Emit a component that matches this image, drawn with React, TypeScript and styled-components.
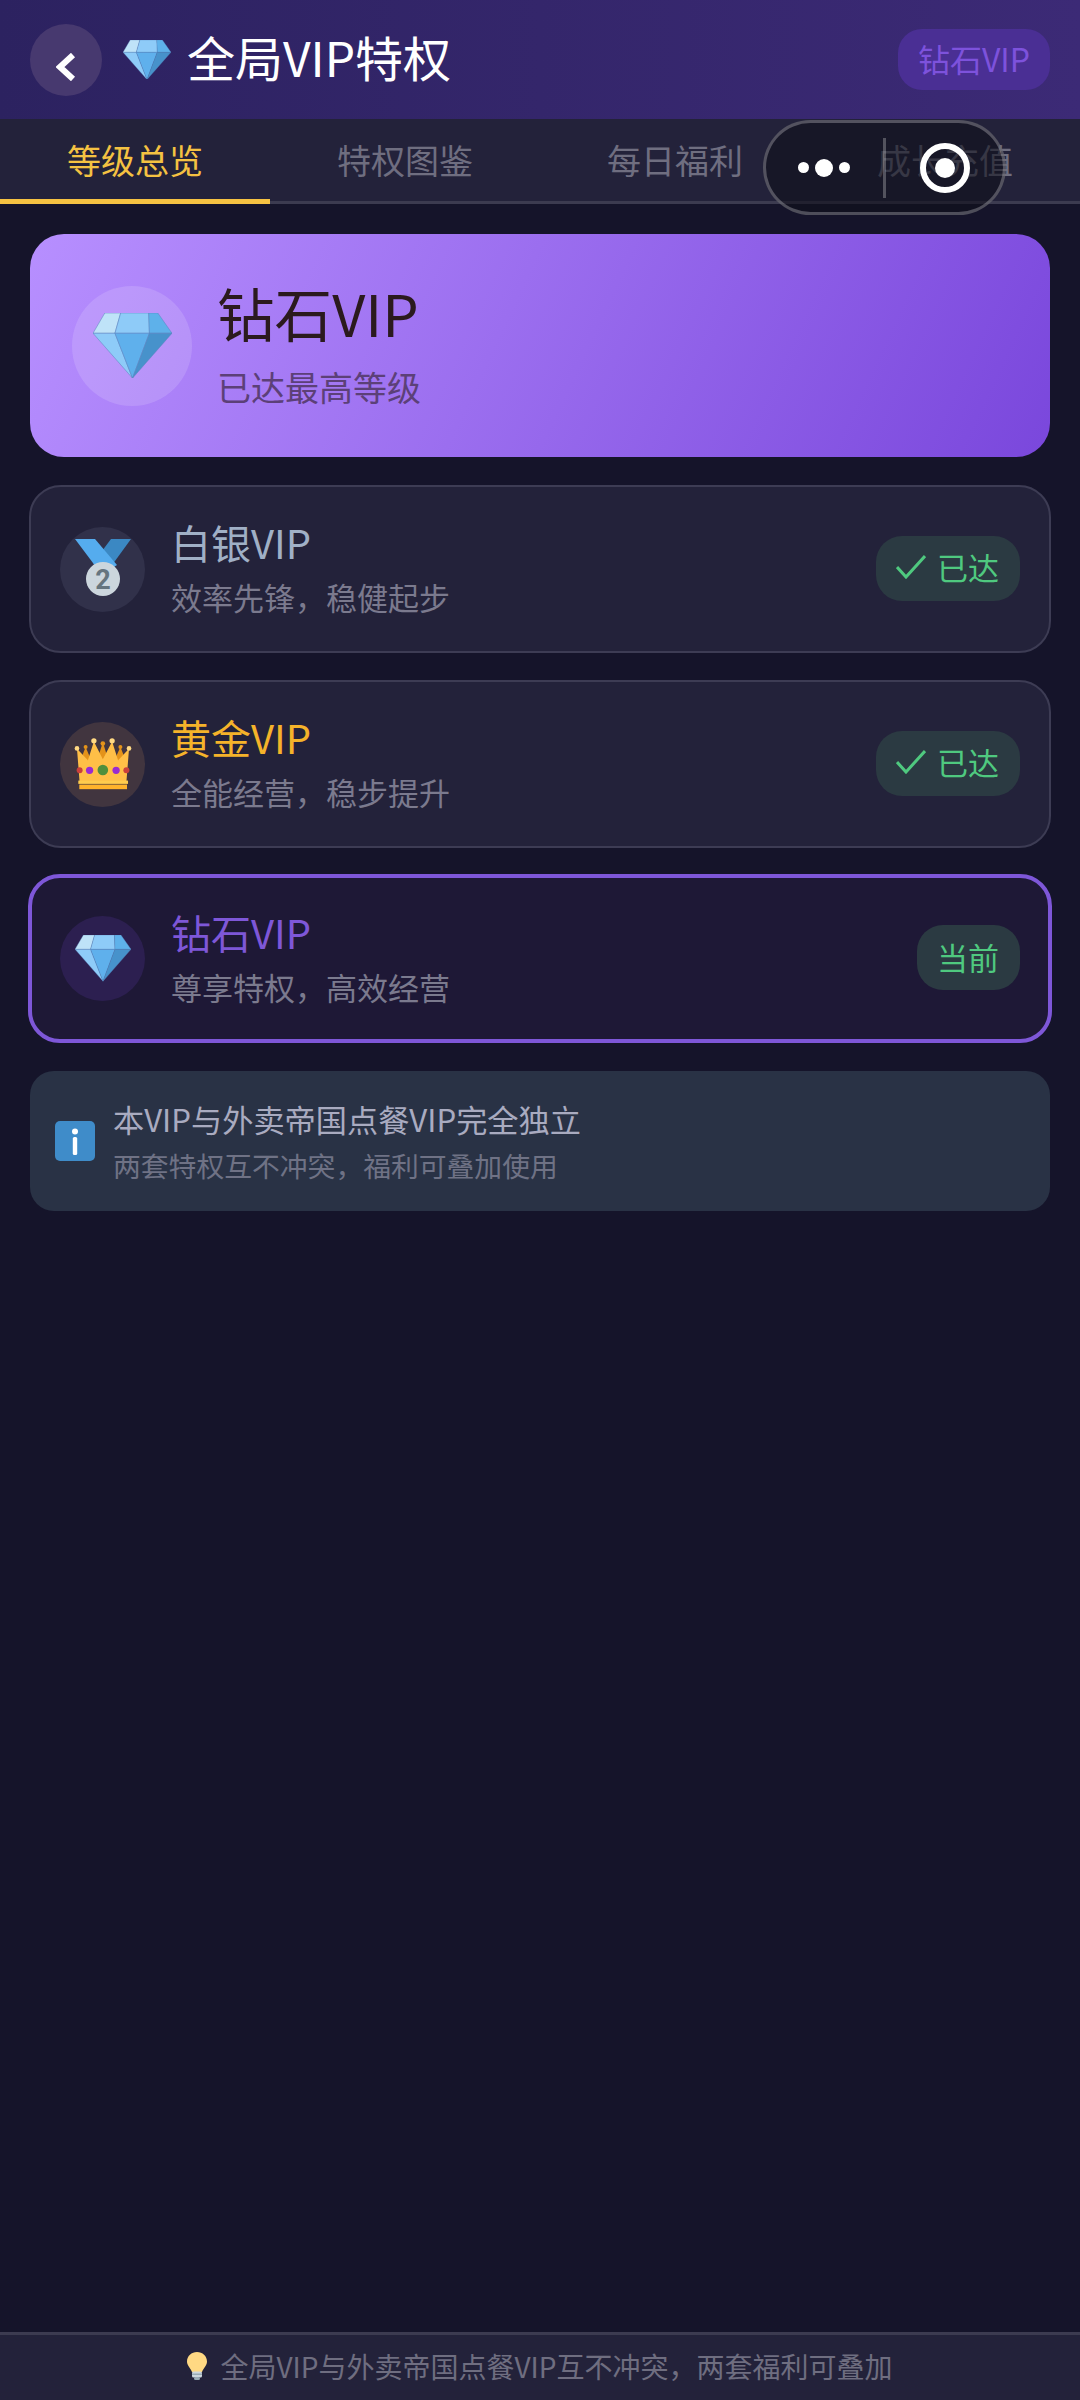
import styled, { createGlobalStyle } from "styled-components";

const GlobalStyle = createGlobalStyle`
  html, body {
    margin: 0;
    padding: 0;
    background: #15142a;
  }
  * {
    box-sizing: border-box;
  }
`;

const Page = styled.div`
  position: relative;
  display: flex;
  flex-direction: column;
  width: 1080px;
  height: 2400px;
  background: #15142a;
  font-family: "Noto Sans CJK SC", sans-serif;
  overflow: hidden;
`;

const Header = styled.header`
  display: flex;
  align-items: center;
  height: 119px;
  padding: 0 30px;
  background: linear-gradient(90deg, #2c2260, #3c2a76);
`;

const BackButton = styled.div`
  display: flex;
  align-items: center;
  justify-content: center;
  width: 72px;
  height: 72px;
  border-radius: 50%;
  background: #47396f;
  padding-top: 14px;
`;

const HeaderTitle = styled.h1`
  flex: 1;
  margin: 0 0 8px 16px;
  font-size: 48px;
  font-weight: 400;
  line-height: 60px;
  color: #ffffff;
`;

const HeaderIcon = styled.div`
  display: flex;
  margin-left: 21px;
`;

const LevelTag = styled.div`
  display: flex;
  align-items: center;
  justify-content: center;
  width: 152px;
  height: 61px;
  padding-bottom: 3px;
  border-radius: 24px;
  background: #4a2f94;
  color: #7d52dc;
  font-size: 32px;
`;

const Tabs = styled.nav`
  display: flex;
  height: 85px;
  background: #23223a;
  border-bottom: 3px solid #3c3b50;
`;

const Tab = styled.div<{ $active?: boolean }>`
  flex: 1;
  height: 85px;
  display: flex;
  align-items: center;
  justify-content: center;
  padding-bottom: ${(p) => (p.$active ? 0 : 5)}px;
  font-size: 34px;
  color: ${(p) => (p.$active ? "#f5c242" : "#6f6e80")};
  border-bottom: ${(p) => (p.$active ? "5px solid #f5c242" : "none")};
`;

const Capsule = styled.div`
  position: absolute;
  left: 763px;
  top: 120px;
  display: flex;
  align-items: center;
  width: 243px;
  height: 95px;
  border-radius: 48px;
  background: rgba(16, 15, 25, 0.58);
  border: 3px solid rgba(255, 255, 255, 0.26);
`;

const CapsuleSide = styled.div`
  flex: 1;
  height: 100%;
  display: flex;
  align-items: center;
  justify-content: center;
`;

const CapsuleLine = styled.div`
  width: 3px;
  height: 60px;
  background: rgba(255, 255, 255, 0.26);
`;

const Dots = styled.div`
  display: flex;
  align-items: center;
  gap: 6px;
  margin-right: 2px;
`;

const Dot = styled.span<{ $big?: boolean }>`
  display: block;
  width: ${(p) => (p.$big ? 18 : 11)}px;
  height: ${(p) => (p.$big ? 18 : 11)}px;
  border-radius: 50%;
  background: #ffffff;
`;

const Ring = styled.div`
  display: flex;
  align-items: center;
  justify-content: center;
  width: 50px;
  height: 50px;
  border-radius: 50%;
  border: 6px solid #ffffff;
  &::after {
    content: "";
    width: 20px;
    height: 20px;
    border-radius: 50%;
    background: #ffffff;
  }
`;

const Main = styled.main`
  flex: 1;
  display: flex;
  flex-direction: column;
  gap: 27px;
  padding: 30px 30px 0;
`;

const Hero = styled.section`
  display: flex;
  align-items: center;
  height: 223px;
  margin-bottom: 1px;
  padding-left: 42px;
  border-radius: 34px;
  background: linear-gradient(115deg, #b78fff, #7a47dc);
`;

const HeroBadge = styled.div`
  display: flex;
  align-items: center;
  justify-content: center;
  width: 120px;
  height: 120px;
  border-radius: 50%;
  background: rgba(255, 255, 255, 0.14);
`;

const HeroText = styled.div`
  margin-left: 25px;
  padding-bottom: 7px;
`;

const HeroTitle = styled.div`
  font-size: 57.6px;
  line-height: 72px;
  color: #2b1a1e;
`;

const HeroSub = styled.div`
  margin-top: 18px;
  font-size: 34px;
  line-height: 42px;
  color: #5c4078;
`;

const LevelCard = styled.section<{ $current?: boolean }>`
  display: flex;
  align-items: center;
  height: ${(p) => (p.$current ? 169 : 168)}px;
  margin: ${(p) => (p.$current ? "-1px -2px 0" : "0 -1px")};
  padding: 0 ${(p) => (p.$current ? 28 : 29)}px;
  border-radius: 32px;
  background: ${(p) => (p.$current ? "#1e1836" : "#23223a")};
  border: ${(p) => (p.$current ? "4px solid #7e57d8" : "2px solid #3d3c54")};
`;

const LevelIcon = styled.div<{ $bg: string }>`
  display: flex;
  align-items: center;
  justify-content: center;
  flex: none;
  width: 85px;
  height: 85px;
  border-radius: 50%;
  background: ${(p) => p.$bg};
`;

const LevelText = styled.div`
  flex: 1;
  margin-left: 26px;
  padding-bottom: 4px;
`;

const LevelName = styled.div<{ $color: string }>`
  font-size: 40px;
  line-height: 52px;
  color: ${(p) => p.$color};
`;

const LevelDesc = styled.div`
  margin-top: 8px;
  font-size: 31px;
  line-height: 42px;
  color: #7b7a8e;
`;

const StatusBadge = styled.div`
  display: flex;
  align-items: center;
  gap: 11px;
  height: 65px;
  margin-bottom: 2px;
  padding: 0 21px 3px 20px;
  border-radius: 26px;
  background: #2b3a42;
  color: #4fc97f;
  font-size: 31px;
`;

const Notice = styled.section`
  display: flex;
  align-items: center;
  height: 140px;
  margin-top: 1px;
  padding-left: 25px;
  border-radius: 24px;
  background: #293245;
`;

const NoticeText = styled.div`
  margin-left: 18px;
  padding-bottom: 1px;
`;

const NoticeTitle = styled.div`
  font-size: 31.2px;
  line-height: 44px;
  color: #a9abc0;
`;

const NoticeSub = styled.div`
  margin-top: 4px;
  font-size: 27.8px;
  line-height: 40px;
  color: #6f7285;
`;

const Footer = styled.footer`
  display: flex;
  align-items: center;
  justify-content: center;
  gap: 13px;
  height: 68px;
  padding-bottom: 4px;
  background: #23223a;
  border-top: 3px solid #3c3b50;
  color: #6f6e80;
  font-size: 28px;
`;

function Diamond({ size }: { size: number }) {
  return (
    <svg width={size} height={(size * 193) / 234} viewBox="0 0 234 193">
      <g stroke="#5a86bd" strokeWidth="1.5" strokeLinejoin="round">
        <polygon points="0,60 35,0 82,0 65,60" fill="#bfe3f8" />
        <polygon points="82,0 165,0 167,60 65,60" fill="#8ecbf8" />
        <polygon points="165,0 192,0 234,60 167,60" fill="#5eb1ea" />
        <polygon points="0,60 65,60 117,193" fill="#8ecbf8" />
        <polygon points="65,60 167,60 117,193" fill="#5fb0ec" />
        <polygon points="167,60 234,60 117,193" fill="#4792cb" />
      </g>
    </svg>
  );
}

function Medal() {
  return (
    <svg width="56" height="60" viewBox="0 0 56 60">
      <polygon points="56,0 36,0 18,24 32,33" fill="#3b88c3" />
      <polygon points="0,0 20,0 42,26 30,34 24,32" fill="#55acee" />
      <circle cx="28" cy="40" r="17" fill="#ccd6dd" />
      <text
        x="28"
        y="50"
        textAnchor="middle"
        fontSize="27"
        fontWeight="700"
        fontFamily="Roboto, sans-serif"
        fill="#66757f"
      >
        2
      </text>
    </svg>
  );
}

function Crown() {
  return (
    <svg width="58" height="55" viewBox="70 95 175 165">
      <g fill="#e4931a">
        <polygon points="90,165 105,125 122,165" />
        <polygon points="140,165 157,110 174,165" />
        <polygon points="192,165 210,125 226,165" />
      </g>
      <polygon
        points="79,130 112,165 130,108 157,162 185,108 203,165 236,130 228,232 87,232"
        fill="#ffbf47"
      />
      <rect x="83" y="226" width="150" height="10" fill="#ffcc4d" />
      <rect x="86" y="238" width="144" height="14" fill="#ffb32b" />
      <g fill="#ffd983">
        <circle cx="79" cy="129" r="7" />
        <circle cx="130" cy="106" r="8" />
        <circle cx="185" cy="106" r="8" />
        <circle cx="236" cy="129" r="7" />
      </g>
      <circle cx="105" cy="125" r="6" fill="#e4931a" />
      <circle cx="157" cy="114" r="7" fill="#e4931a" />
      <circle cx="210" cy="125" r="6" fill="#e4931a" />
      <circle cx="87" cy="195" r="9" fill="#c9403c" />
      <circle cx="117" cy="195" r="11" fill="#9a2bd0" />
      <circle cx="157" cy="194" r="16" fill="#4f8f3c" />
      <circle cx="197" cy="195" r="11" fill="#9a2bd0" />
      <circle cx="228" cy="195" r="9" fill="#c9403c" />
    </svg>
  );
}

function Check() {
  return (
    <svg width="30" height="24" viewBox="0 0 30 24">
      <polyline
        points="1,12 10,22 29,1"
        fill="none"
        stroke="#4fc97f"
        strokeWidth="3"
      />
    </svg>
  );
}

function InfoIcon() {
  return (
    <svg width="40" height="40" viewBox="0 0 40 40">
      <rect width="40" height="40" rx="5" fill="#3f8cc9" />
      <circle cx="20" cy="10.5" r="3" fill="#ffffff" />
      <rect x="17.8" y="16" width="4.4" height="18" rx="1.5" fill="#ffffff" />
    </svg>
  );
}

function Bulb() {
  return (
    <svg width="20" height="28" viewBox="0 0 20 28">
      <path
        d="M10 0C4.5 0 0 4 0 9.5 0 13.5 3.5 16 5 20h10c1.5-4 5-6.500 5-10.500C20 4 15.500 0 10 0z"
        fill="#ffd983"
      />
      <rect x="5" y="19.500" width="10" height="6" rx="1.500" fill="#ccd6dd" />
      <rect x="5" y="21.500" width="10" height="1.500" fill="#99aab5" />
      <rect x="7" y="25" width="6" height="3" rx="1.500" fill="#99aab5" />
    </svg>
  );
}

const tabs = ["等级总览", "特权图鉴", "每日福利", "成长充值"];

export default function App() {
  return (
    <Page>
      <GlobalStyle />
      <Header>
        <BackButton>
          <svg width="20" height="28" viewBox="0 0 20 28">
            <polyline
              points="17,2 4,14 17,26"
              fill="none"
              stroke="#ffffff"
              strokeWidth="6"
            />
          </svg>
        </BackButton>
        <HeaderIcon>
          <Diamond size={48} />
        </HeaderIcon>
        <HeaderTitle>全局VIP特权</HeaderTitle>
        <LevelTag>钻石VIP</LevelTag>
      </Header>
      <Tabs>
        {tabs.map((t, i) => (
          <Tab key={t} $active={i === 0}>
            {t}
          </Tab>
        ))}
      </Tabs>
      <Capsule>
        <CapsuleSide>
          <Dots>
            <Dot />
            <Dot $big />
            <Dot />
          </Dots>
        </CapsuleSide>
        <CapsuleLine />
        <CapsuleSide>
          <Ring />
        </CapsuleSide>
      </Capsule>
      <Main>
        <Hero>
          <HeroBadge>
            <Diamond size={79} />
          </HeroBadge>
          <HeroText>
            <HeroTitle>钻石VIP</HeroTitle>
            <HeroSub>已达最高等级</HeroSub>
          </HeroText>
        </Hero>
        <LevelCard>
          <LevelIcon $bg="#31314a">
            <Medal />
          </LevelIcon>
          <LevelText>
            <LevelName $color="#a0b0c6">白银VIP</LevelName>
            <LevelDesc>效率先锋，稳健起步</LevelDesc>
          </LevelText>
          <StatusBadge>
            <Check />
            已达
          </StatusBadge>
        </LevelCard>
        <LevelCard>
          <LevelIcon $bg="#41353f">
            <Crown />
          </LevelIcon>
          <LevelText>
            <LevelName $color="#f5b32a">黄金VIP</LevelName>
            <LevelDesc>全能经营，稳步提升</LevelDesc>
          </LevelText>
          <StatusBadge>
            <Check />
            已达
          </StatusBadge>
        </LevelCard>
        <LevelCard $current>
          <LevelIcon $bg="#2c1f50">
            <Diamond size={56} />
          </LevelIcon>
          <LevelText>
            <LevelName $color="#7e57d8">钻石VIP</LevelName>
            <LevelDesc>尊享特权，高效经营</LevelDesc>
          </LevelText>
          <StatusBadge>当前</StatusBadge>
        </LevelCard>
        <Notice>
          <InfoIcon />
          <NoticeText>
            <NoticeTitle>本VIP与外卖帝国点餐VIP完全独立</NoticeTitle>
            <NoticeSub>两套特权互不冲突，福利可叠加使用</NoticeSub>
          </NoticeText>
        </Notice>
      </Main>
      <Footer>
        <Bulb />
        全局VIP与外卖帝国点餐VIP互不冲突，两套福利可叠加
      </Footer>
    </Page>
  );
}
